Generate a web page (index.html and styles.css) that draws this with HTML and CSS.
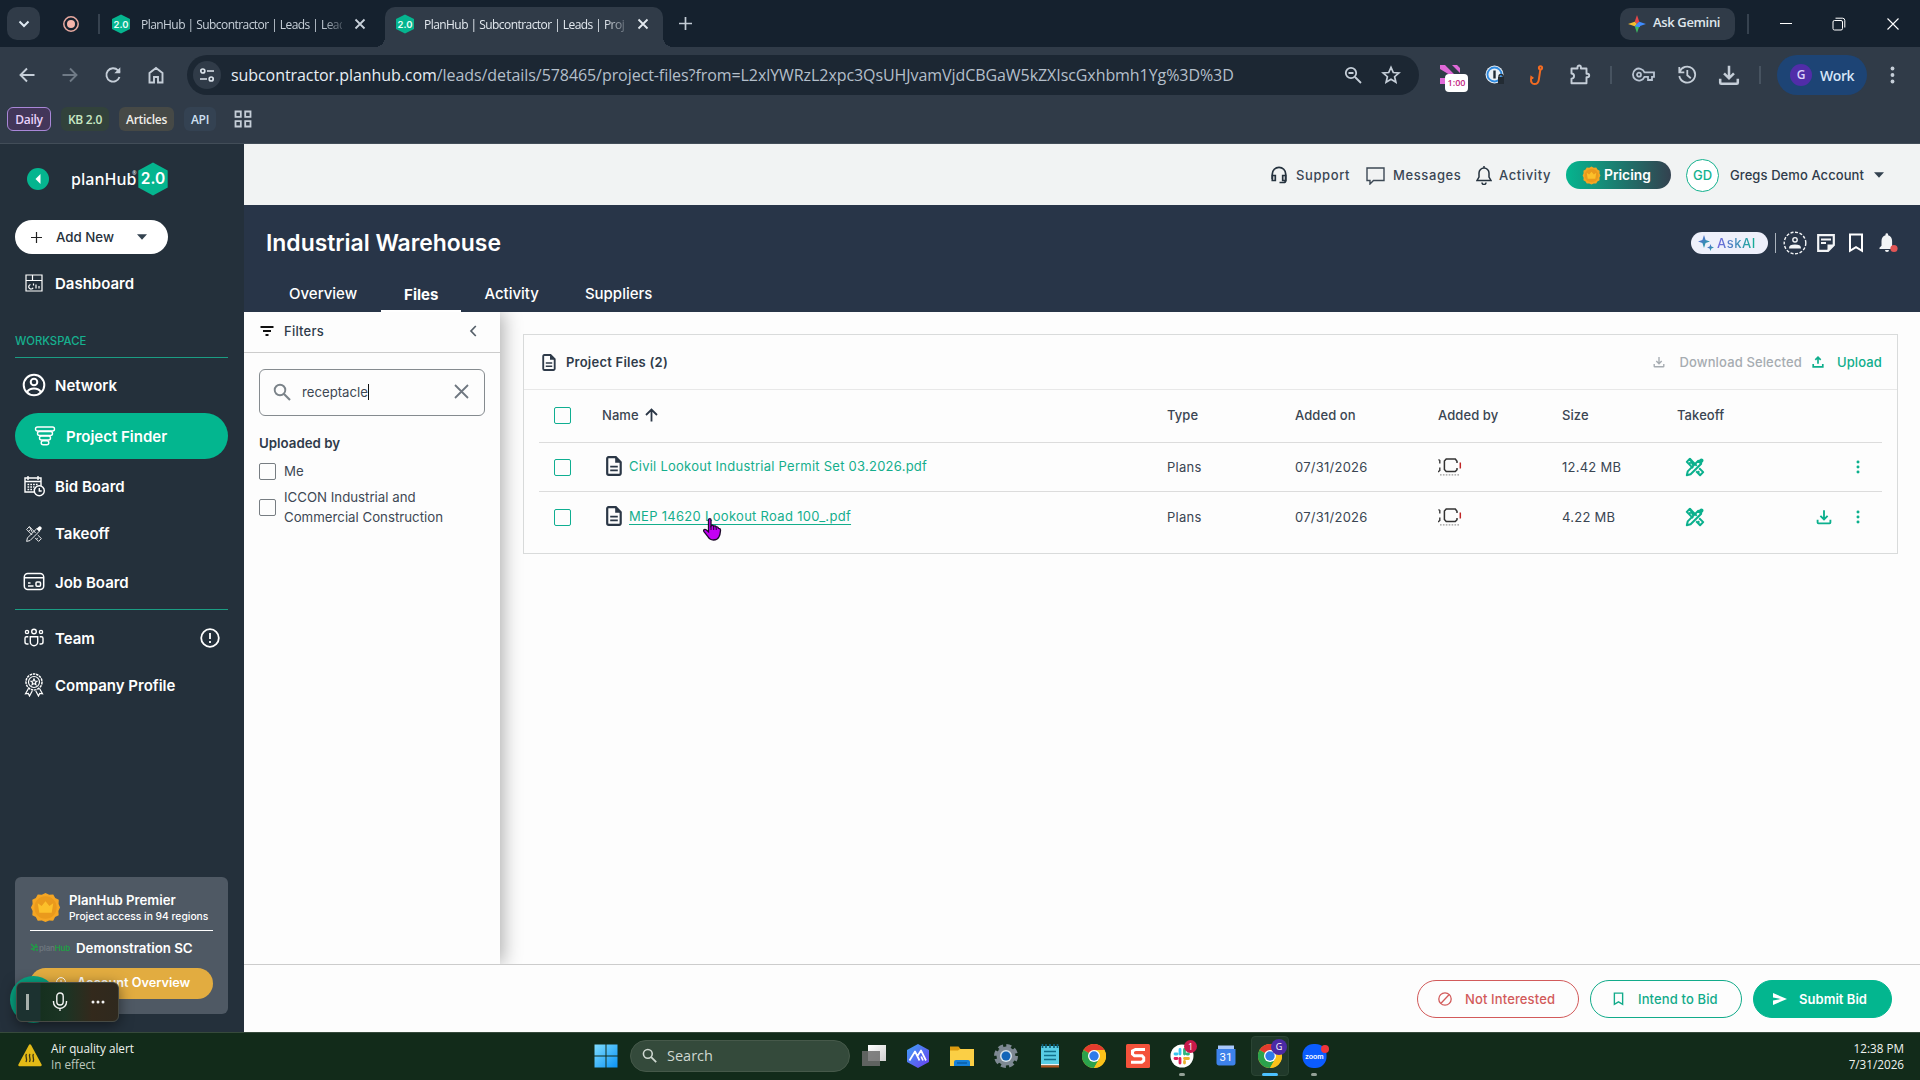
FILE: index.html
```html
<!DOCTYPE html>
<html lang="en">
<head>
    <meta charset="UTF-8">
    <meta name="viewport" content="width=device-width, initial-scale=1.0">
    <title>PlanHub | Subcontractor | Leads | Project Files</title>
    <link rel="stylesheet" href="styles.css">
</head>
<body>
    <!-- shared icons -->
    <svg class="sprite" width="0" height="0">
        <defs>
            <linearGradient id="askGrad" x1="0" y1="0" x2="1" y2="1"><stop offset="0" stop-color="#6a5be0"/><stop offset="1" stop-color="#12b095"/></linearGradient>
            <linearGradient id="winGrad" x1="0" y1="0" x2="1" y2="1"><stop offset="0" stop-color="#7fdcff"/><stop offset="1" stop-color="#0a93f5"/></linearGradient>
            <linearGradient id="appGrad" x1="0" y1="0" x2="1" y2="1"><stop offset="0" stop-color="#3fa2f5"/><stop offset="1" stop-color="#6a3df0"/></linearGradient>
            <linearGradient id="tvGrad" x1="0" y1="0" x2="1" y2="1"><stop offset="0" stop-color="#ffffff"/><stop offset="1" stop-color="#cfcfcf"/></linearGradient>
        </defs>
        <symbol id="close" viewBox="0 0 12 12"><path d="M1.5 1.5l9 9M10.5 1.5l-9 9" fill="none" stroke="currentColor" stroke-width="1.8"/></symbol>
        <symbol id="file" viewBox="0 0 16 20">
            <path d="M2.5 1.2h7.3l4.9 4.9v11.2a1.5 1.5 0 0 1-1.5 1.5H2.7a1.5 1.5 0 0 1-1.5-1.5V2.7a1.4 1.4 0 0 1 1.3-1.5z" fill="none" stroke="currentColor" stroke-width="2.2"/>
            <path d="M9.2 1v5.8H15z" fill="currentColor"/>
            <path d="M4.2 10.6h7.6M4.2 14.4h7.6" stroke="currentColor" stroke-width="1.6"/>
        </symbol>
        <symbol id="takeoff" viewBox="0 0 20 20">
            <g fill="none" stroke="currentColor" stroke-linejoin="round">
                <path d="M8.2 8.300L4.900 1.800 1.800 4.900l6.200 6.200M11.800 8.900L8.200 5.100 4.900 1.800M11.200 14.300l3.900 3.900 3.100-3.100-4-3.900"/>
                <path d="M13.300 3.800L2.700 14.400l-.9 3.800 3.800-.9L16.200 6.700zM4 7l1.700-1.700M12.800 15.800l1.500-1.500"/>
            </g>
            <path d="M12.800 4.300l2.200-2.200c.8-.8 2-.8 2.900 0s.8 2.100 0 2.900l-2.200 2.200z" fill="currentColor"/>
        </symbol>
        <symbol id="badge" viewBox="0 0 32 32">
            <path d="M16 1l3.8 1.8 4.2-.3 2 3.6 3.7 2-.2 4.2L31 16l-1.7 3.7.3 4.2-3.7 2-2 3.7-4.1-.3L16 31l-3.8-1.7-4.2.3-2-3.7-3.6-2 .3-4.2L1 16l1.7-3.7-.3-4.2 3.6-2L8 2.500l4.200.3z" fill="#f5a623"/>
            <circle cx="16" cy="16" r="11.500" fill="#ea9a1c"/>
            <path d="M8 11.500l4 3 4-5 4 5 4-3-1.600 10H9.600z" fill="#fcc02a"/>
        </symbol>
        <symbol id="download" viewBox="0 0 20 20"><path d="M10 1.500v11M5.500 8.500L10 13l4.500-4.500M2 13.500V17a1 1 0 0 0 1 1h14a1 1 0 0 0 1-1v-3.500" fill="none" stroke="currentColor" stroke-width="2.300"/></symbol>
        <symbol id="upload" viewBox="0 0 20 20"><path d="M10 13V2.500M5.500 6.500L10 2l4.500 4.500M2 13.500V18h16v-4.500" fill="none" stroke="currentColor" stroke-width="2.800"/></symbol>
        <symbol id="kebab" viewBox="0 0 4 16"><circle cx="2" cy="2.200" r="1.700" fill="currentColor"/><circle cx="2" cy="8" r="1.700" fill="currentColor"/><circle cx="2" cy="13.800" r="1.700" fill="currentColor"/></symbol>
        <symbol id="bookmark" viewBox="0 0 16 20"><path d="M2 1.500h12v16.300l-6-3.600-6 3.600z" fill="none" stroke="currentColor" stroke-width="2"/></symbol>
        <symbol id="search" viewBox="0 0 18 18"><circle cx="7" cy="7" r="5.300" fill="none" stroke="currentColor" stroke-width="1.900"/><path d="M11 11l6 6" stroke="currentColor" stroke-width="2.100"/></symbol>
        <symbol id="chrome" viewBox="0 0 24 24">
            <circle cx="12" cy="12" r="12" fill="#fbc11a"/>
            <path d="M12 12L1.600 6A12 12 0 0 1 22.400 6z" fill="#e33b2e"/>
            <path d="M1.600 6A12 12 0 0 0 12 24l5.200-9L12 12z" fill="#2ba24c"/>
            <path d="M12 6h10.400A12 12 0 0 1 12 24l5.200-9z" fill="#fbc11a"/>
            <circle cx="12" cy="12" r="6" fill="#fff"/>
            <circle cx="12" cy="12" r="4.700" fill="#2f7bea"/>
        </symbol>
        <symbol id="company" viewBox="0 0 24 18">
            <path d="M.5 1.500l1.300 1v3M1.800 9.500v3L0 14" fill="none" stroke="#3a3a3a" stroke-width="1.400"/>
            <path d="M19 5V3.200L17.300 1H8.200L6.400 3v8.500l1.800 2h9.100L19 11.700V10" fill="none" stroke="#333" stroke-width="1.500"/>
            <path d="M22.300 4.500v6" stroke="#c02626" stroke-width="1.500"/>
            <path d="M2 16.800h19" stroke="#999" stroke-width="1.200" stroke-dasharray="1.600 1.300"/>
        </symbol>
    </svg>

    <!-- browser -->
    <div class="tabstrip">
        <div class="tab-search"><svg width="12" height="8" viewBox="0 0 12 8"><path d="M1.500 1.500L6 6l4.500-4.500" fill="none" stroke="#dfe9f2" stroke-width="2"/></svg></div>
        <svg class="record" width="18" height="18" viewBox="0 0 18 18"><circle cx="9" cy="9" r="7.200" fill="none" stroke="#e8a9a0" stroke-width="1.500"/><circle cx="9" cy="9" r="4" fill="#f6b5ab"/></svg>
        <span class="tab-divider"></span>
        <div class="tab">
            <svg width="20" height="20" viewBox="0 0 20 20"><path d="M10 .5l9 4.600v9.800l-9 4.600-9-4.600V5.100z" fill="#05b58f"/><text x="10" y="13.600" text-anchor="middle" class="favicon-text">2.0</text></svg>
            <span class="tab-title">PlanHub | Subcontractor | Leads | Lead</span>
            <svg class="tab-close" width="12" height="12"><use href="#close"/></svg>
        </div>
        <div class="tab active">
            <svg width="20" height="20" viewBox="0 0 20 20"><path d="M10 .5l9 4.600v9.800l-9 4.600-9-4.600V5.100z" fill="#05b58f"/><text x="10" y="13.600" text-anchor="middle" class="favicon-text">2.0</text></svg>
            <span class="tab-title">PlanHub | Subcontractor | Leads | Proj</span>
            <svg class="tab-close" width="12" height="12"><use href="#close"/></svg>
        </div>
        <svg class="new-tab" width="13" height="13" viewBox="0 0 13 13"><path d="M6.500 0v13M0 6.500h13" stroke="#c3ccd5" stroke-width="1.700"/></svg>
        <div class="gemini">
            <svg width="18" height="18" viewBox="0 0 18 18">
                <path d="M9 0l2.300 6.700L9 9 6.700 6.700z" fill="#e5484a"/><path d="M18 9l-6.700 2.300L9 9l2.300-2.300z" fill="#3f8cff"/>
                <path d="M9 18l-2.300-6.700L9 9l2.300 2.300z" fill="#3cb961"/><path d="M0 9l6.700-2.300L9 9l-2.300 2.300z" fill="#f4be2f"/><path d="M11.300 6.700l.9 5.500-5.500-.9z" fill="#3f8cff"/>
            </svg>
            <span>Ask Gemini</span>
        </div>
        <span class="tab-divider window-divider"></span>
        <svg class="win-min" width="12" height="12" viewBox="0 0 12 12"><path d="M0 5.500h12" stroke="#fff"/></svg>
        <svg class="win-restore" width="14" height="14" viewBox="0 0 14 14"><rect x="1" y="3.500" width="9.500" height="9.500" rx="1.500" fill="none" stroke="#fff"/><path d="M3.500 1.200h7a2.300 2.300 0 0 1 2.300 2.300v7" fill="none" stroke="#fff"/></svg>
        <svg class="win-close" width="12" height="12" viewBox="0 0 12 12"><path d="M.5.5l11 11M11.500.5l-11 11" stroke="#fff" stroke-width="1.100"/></svg>
    </div>

    <div class="toolbar">
        <div class="nav-buttons">
            <svg width="18" height="18" viewBox="0 0 18 18"><path d="M16.500 9H3M9 2.500L2.500 9 9 15.500" fill="none" stroke="#c5ced8" stroke-width="1.900"/></svg>
            <svg width="18" height="18" viewBox="0 0 18 18"><path d="M1.500 9H15M9 2.500L15.500 9 9 15.500" fill="none" stroke="#6f7a86" stroke-width="1.900"/></svg>
            <svg width="18" height="18" viewBox="0 0 18 18"><path d="M15.500 11A6.700 6.700 0 1 1 14 4.300l1.700 1.700" fill="none" stroke="#c5ced8" stroke-width="1.900"/><path d="M16.300 1.200v6h-6z" fill="#c5ced8"/></svg>
            <svg width="18" height="18" viewBox="0 0 18 18"><path d="M2.500 7L9 2l6.500 5v9.500H11V11H7v5.500H2.500z" fill="none" stroke="#c5ced8" stroke-width="1.900"/></svg>
        </div>
        <div class="address">
            <span class="site-info"><svg width="16" height="16" viewBox="0 0 16 16" fill="none" stroke="#dbe3ea" stroke-width="1.700"><circle cx="3.800" cy="4" r="2"/><path d="M8 4h7M1 12h7"/><circle cx="12.200" cy="12" r="2"/></svg></span>
            <span class="url"><b>subcontractor.planhub.com</b>/leads/details/578465/project-files?from=L2xlYWRzL2xpc3QsUHJvamVjdCBGaW5kZXIscGxhbmh1Yg%3D%3D</span>
            <div class="address-icons">
                <svg width="20" height="20" viewBox="0 0 20 20" fill="none" stroke="#c5ced8" stroke-width="1.800"><circle cx="8" cy="8" r="5.200"/><path d="M5.500 8h5M12 12l6 6"/></svg>
                <svg width="20" height="20" viewBox="0 0 20 20"><path d="M10 2.300l2.300 5.200 5.600.5-4.300 3.700 1.300 5.600-4.900-3-4.900 3 1.300-5.600L2.100 8l5.600-.5z" fill="none" stroke="#c5ced8" stroke-width="1.700"/></svg>
            </div>
        </div>
        <div class="timer-ext">
            <svg width="20" height="20" viewBox="0 0 20 20"><path d="M0 0h5l10 10h-5L0 4zM8 0h4l8 8v-5l-3-3zM0 13h5v6H0z" fill="#e069d8"/></svg>
            <span>1:00</span>
        </div>
        <svg class="ext-pass" width="20" height="20" viewBox="0 0 20 20"><circle cx="9.500" cy="9.500" r="9" fill="#e8eef4"/><circle cx="9.500" cy="9.500" r="7" fill="none" stroke="#2f8be0" stroke-width="1.800"/><path d="M9.500 5.500v8" stroke="#1f2933" stroke-width="2.400"/><path d="M13 12h6v7h-6z" fill="#222b33"/><path d="M14 13v-1.500a2 2 0 0 1 4 0V13" fill="none" stroke="#222b33" stroke-width="1.400"/></svg>
        <svg class="ext-hook" width="20" height="20" viewBox="0 0 20 20" fill="none" stroke="#f26b22" stroke-width="2"><circle cx="13.500" cy="2.800" r="1.600"/><path d="M13.300 4.800l-1.500 10c-.4 2.800-2 4.200-4.300 4.200s-3.700-1.800-3.500-4.700l.3-2.300 2 1.500"/></svg>
        <svg class="ext-puzzle" width="22" height="22" viewBox="0 0 22 22"><path d="M2.500 4.500h6V3.200a1.700 1.700 0 0 1 3.400 0v1.300h5.600v5.300h1a1.700 1.700 0 0 1 0 3.400h-1v6h-15v-4.500c3.400-.2 3.400-5 0-5.200z" fill="none" stroke="#c5ced8" stroke-width="1.900" stroke-linejoin="round"/></svg>
        <span class="bar-divider"></span>
        <svg class="bar-key" width="24" height="16" viewBox="0 0 24 16" fill="none" stroke="#b9c4d2" stroke-width="1.800"><path d="M12.500 5.300h9.500v4.500h-2V13h-4v-3.200h-3.500A6 6 0 1 1 12.500 5.300z"/><circle cx="7" cy="7.700" r="2"/></svg>
        <svg class="bar-history" width="20" height="20" viewBox="0 0 20 20" fill="none" stroke="#c5ced8" stroke-width="1.800"><path d="M2.600 7A8 8 0 1 1 2.300 11M2.300 2v5.300h5M10.300 5v5.300l3.500 3"/></svg>
        <svg class="bar-download" width="22" height="22"><use href="#download"/></svg>
        <span class="bar-divider"></span>
        <div class="profile"><span class="profile-dot">G</span>Work</div>
        <svg class="bar-menu" width="5" height="18"><use href="#kebab"/></svg>
    </div>

    <div class="bookmarks">
        <span class="bookmark daily">Daily</span>
        <span class="bookmark kb">KB 2.0</span>
        <span class="bookmark articles">Articles</span>
        <span class="bookmark api">API</span>
        <svg width="18" height="18" viewBox="0 0 18 18" fill="none" stroke="#c5ced8" stroke-width="1.800"><path d="M1.500 1.500h5.300v5.300H1.500zM11.200 1.500h5.300v5.300h-5.300zM1.500 11.200h5.300v5.300H1.500zM11.200 11.200h5.300v5.300h-5.300z"/></svg>
    </div>

    <!-- app -->
    <div class="app">
        <aside class="sidebar">
            <div class="brand">
                <span class="collapse"><svg width="6" height="10" viewBox="0 0 6 10"><path d="M5.500 0v10L.5 5z" fill="#fff"/></svg></span>
                <span class="brand-name">planHub<sup>®</sup></span>
                <svg width="30" height="34" viewBox="0 0 30 34"><path d="M15 .5l14.700 8v17L15 33.500.3 25.500v-17z" fill="#05b58f"/><text x="15" y="22.300" text-anchor="middle" font-family="Inter, sans-serif" font-size="15.500" font-weight="600" fill="#fff">2.0</text></svg>
            </div>
            <div class="add-new">
                <svg width="11" height="11" viewBox="0 0 11 11"><path d="M5.500 0v11M0 5.500h11" stroke="#222" stroke-width="1.200"/></svg>
                <span>Add New</span>
                <svg width="10" height="6" viewBox="0 0 10 6"><path d="M0 .3h10L5 5.800z" fill="#33424f"/></svg>
            </div>
            <nav>
                <a class="nav-item dashboard">
                    <svg width="22" height="22" viewBox="0 0 22 22" fill="none" stroke="#fff" stroke-width="1.200"><path d="M3 3h16v16H3zM3 8.500h16M9.500 3v5.500"/><path d="M7.500 12.500a2.300 2.300 0 1 0 2.600 3.200M13 16.500v-4M16 16.500v-2.500M10.500 11.500v2"/></svg>
                    Dashboard
                </a>
                <div class="nav-label">WORKSPACE</div>
                <a class="nav-item network">
                    <svg width="24" height="24" viewBox="0 0 24 24" fill="none" stroke="#fff" stroke-width="2"><circle cx="12" cy="12" r="10.300"/><circle cx="12" cy="9" r="3.300"/><path d="M5 19.200c1.500-2.600 4-3.700 7-3.700s5.500 1.100 7 3.700"/></svg>
                    Network
                </a>
                <a class="nav-item selected">
                    <svg width="22" height="22" viewBox="0 0 22 22" fill="none" stroke="#fff" stroke-width="1.400"><rect x="1.500" y="2" width="19" height="4" rx="2"/><rect x="3.500" y="6.500" width="15" height="4" rx="2"/><rect x="5.500" y="11" width="11" height="4" rx="2"/><rect x="7.200" y="15.700" width="7.600" height="4" rx="2"/></svg>
                    Project Finder
                </a>
                <a class="nav-item bid-board">
                    <svg width="24" height="24" viewBox="0 0 24 24" fill="none" stroke="#fff" stroke-width="1.400"><path d="M12 18H3V4h16v8M3 7.500h16M6 2v4M16 2v4"/><path d="M5.500 10.500h11M5.500 13h7M5.500 15.500h6" stroke-dasharray="1.700 1.100"/><circle cx="17.300" cy="16.800" r="5"/><path d="M17.300 14v3h2.400"/></svg>
                    Bid Board
                </a>
                <a class="nav-item takeoff"><svg width="18" height="18"><use href="#takeoff"/></svg>Takeoff</a>
                <a class="nav-item job-board">
                    <svg width="24" height="24" viewBox="0 0 24 24" fill="none" stroke="#fff" stroke-width="1.500"><rect x="2.300" y="3.500" width="19.400" height="16" rx="3.500"/><path d="M2.500 7.800h19M6 13h2.500M6 16h5.500"/><rect x="14" y="12" width="4.500" height="4.200" rx="1"/></svg>
                    Job Board
                </a>
                <div class="nav-line"></div>
                <a class="nav-item team">
                    <svg width="24" height="24" viewBox="0 0 24 24" fill="none" stroke="#fff" stroke-width="1.400"><circle cx="12" cy="5.500" r="2.300"/><circle cx="5" cy="6" r="1.600"/><circle cx="19" cy="6" r="1.600"/><path d="M8.300 10.700h7.400V16a3.700 3.700 0 0 1-7.400 0zM6.300 10.700H4.500a1.500 1.500 0 0 0-1.500 1.500V16a2 2 0 0 0 2 2h1.500M17.700 10.700h1.800a1.500 1.500 0 0 1 1.500 1.500V16a2 2 0 0 1-2 2h-1.500"/></svg>
                    Team
                    <svg class="alert" width="20" height="20" viewBox="0 0 20 20" fill="none" stroke="#fff" stroke-width="1.800"><circle cx="10" cy="10" r="8.800"/><path d="M10 5v6M10 13v2"/></svg>
                </a>
                <a class="nav-item company">
                    <svg width="24" height="24" viewBox="0 0 24 24" fill="none" stroke="#fff" stroke-width="1.200"><circle cx="12" cy="9" r="8" stroke-width="1.500" stroke-dasharray="2.500 .8"/><circle cx="12" cy="9" r="5.500"/><path d="M12 6l.9 2 2.100.2-1.600 1.400.5 2.100-1.900-1.100-1.900 1.100.5-2.100L9 8.200l2.100-.2zM6.500 15.500l-3 5.300 2.800-.3 1.200 2.500 2.700-5M17.500 15.500l3 5.300-2.800-.3-1.200 2.500-2.700-5"/></svg>
                    Company Profile
                </a>
            </nav>
            <div class="plan-card">
                <div class="plan-row">
                    <svg width="31" height="31"><use href="#badge"/></svg>
                    <div><div class="plan-title">PlanHub Premier</div><div class="plan-sub">Project access in 94 regions</div></div>
                </div>
                <div class="org-row">
                    <span class="org-logo"><svg width="9" height="9" viewBox="0 0 9 9" fill="none" stroke="#1f9f45" stroke-width="1.400"><path d="M1 1l3 3h4M4 8V4M1 6h3M6 1v3M6 7h2"/></svg><i>plan</i><em>Hub</em></span>
                    <span>Demonstration SC</span>
                </div>
                <div class="overview-btn"><svg width="10" height="12" viewBox="0 0 10 12" fill="none" stroke="#fff"><circle cx="5" cy="5" r="4.400"/><path d="M5 3v2l2 1"/></svg>Account Overview</div>
            </div>
        </aside>

        <main class="main">
            <header class="topbar">
                <span class="top-link support"><svg width="16" height="18" viewBox="0 0 16 18" fill="none" stroke="#25323e" stroke-width="1.700"><path d="M1.300 13V8a6.700 6.700 0 0 1 13.400 0v6.500c0 1.500-1 2-2.200 2H8.500"/><path d="M1.300 9.500h3v5h-3zM14.700 9.500h-3v5h3z"/></svg>Support</span>
                <span class="top-link messages"><svg width="19" height="19" viewBox="0 0 19 19" fill="none" stroke="#3c4854" stroke-width="1.400"><path d="M1 2h17v12.500H7.500L4 18v-3.500H1z"/></svg>Messages</span>
                <span class="top-link activity"><svg width="16" height="20" viewBox="0 0 16 20" fill="none" stroke="#25323e" stroke-width="1.500"><path d="M1 15.500h14L13 12V8A5 5 0 0 0 3 8v4zM8 3V1M6 17.500a2 2 0 0 0 4 0"/></svg>Activity</span>
                <span class="pricing"><svg width="19" height="19"><use href="#badge"/></svg>Pricing</span>
                <span class="avatar">GD</span>
                <span class="account">Gregs Demo Account</span>
                <svg class="account-caret" width="10" height="6" viewBox="0 0 10 6"><path d="M0 .3h10L5 5.800z" fill="#33424f"/></svg>
            </header>

            <section class="project-head">
                <div class="project-row">
                    <h1>Industrial Warehouse</h1>
                    <div class="project-actions">
                        <span class="ask-ai"><svg width="16" height="18" viewBox="0 0 16 18" fill="url(#askGrad)"><path d="M6 1l1.600 4.900L12 7.500 7.600 9.100 6 14 4.400 9.100 0 7.500l4.400-1.600z"/><path d="M12.500 10l.9 2.600 2.600.9-2.600.9-.9 2.600-.9-2.600-2.600-.9 2.600-.9z"/></svg><b>AskAI</b></span>
                        <span class="action-line"></span>
                        <svg width="24" height="24" viewBox="0 0 24 24" fill="none" stroke="#f2f4f6" stroke-width="1.400"><circle cx="12" cy="12" r="10.800" stroke-dasharray="3 1.600"/><circle cx="12" cy="8.800" r="2.200"/><path d="M7 16.500c0-2.700 10-2.700 10 0z" stroke-width="1.800"/></svg>
                        <svg class="note" width="18" height="18" viewBox="0 0 18 18"><path d="M1.200 1.200h15.600V11L11 16.800H1.200z" fill="none" stroke="#f2f4f6" stroke-width="2.200"/><path d="M10.500 17v-6.500H17z" fill="#f2f4f6"/><path d="M4 5.500h10M4 9h5" stroke="#f2f4f6" stroke-width="1.900"/></svg>
                        <svg class="mark" width="16" height="20"><use href="#bookmark"/></svg>
                        <svg class="bell" width="20" height="20" viewBox="0 0 20 20"><path d="M1.500 16v-1.200l2-2V8c0-3 1.500-5 4-5.700V1.500a1.300 1.300 0 0 1 2.600 0v.8c2.500.7 4 2.700 4 5.700v4.800l2 2V16zM7 17h4a2 2 0 0 1-4 0z" fill="#f2f4f6"/><circle cx="16" cy="15.500" r="3.600" fill="#e25555"/></svg>
                    </div>
                </div>
                <div class="tabs">
                    <span>Overview</span>
                    <span class="current">Files</span>
                    <span>Activity</span>
                    <span>Suppliers</span>
                </div>
            </section>

            <div class="content">
                <div class="filters">
                    <div class="filters-head">
                        <svg width="14" height="10" viewBox="0 0 14 10" stroke="#111" stroke-width="1.900"><path d="M.5 1h13M3 5h8M5.500 9h3"/></svg>
                        <span>Filters</span>
                        <svg class="filters-close" width="8" height="12" viewBox="0 0 8 12"><path d="M6.800 1L2 6l4.800 5" fill="none" stroke="#555f69" stroke-width="1.700"/></svg>
                    </div>
                    <div class="search-box">
                        <svg width="18" height="18"><use href="#search"/></svg>
                        <span class="search-text">receptacle</span>
                        <svg class="clear" width="15" height="15" viewBox="0 0 15 15"><path d="M1 1l13 13M14 1L1 14" stroke="#6f7780" stroke-width="1.800"/></svg>
                    </div>
                    <h3>Uploaded by</h3>
                    <div class="option"><span class="checkbox grey"></span><span>Me</span></div>
                    <div class="option two-line"><span class="checkbox grey"></span><span>ICCON Industrial and<br>Commercial Construction</span></div>
                </div>

                <div class="files-card">
                    <div class="files-head">
                        <svg width="14" height="17"><use href="#file"/></svg>
                        <span class="files-title">Project Files (2)</span>
                        <span class="download-selected"><svg width="12" height="12"><use href="#download"/></svg>Download Selected</span>
                        <span class="upload"><svg width="12" height="12"><use href="#upload"/></svg>Upload</span>
                    </div>
                    <div class="row row-head">
                        <span class="checkbox"></span>
                        <span class="sort">Name <svg width="13" height="14" viewBox="0 0 13 14"><path d="M6.500 13.500V2M1 7l5.500-5.500L12 7" fill="none" stroke="#2b3746" stroke-width="1.800"/></svg></span>
                        <span>Type</span><span>Added on</span><span>Added by</span><span>Size</span><span>Takeoff</span><span></span>
                    </div>
                    <div class="row">
                        <span class="checkbox"></span>
                        <span class="name"><svg width="16" height="20"><use href="#file"/></svg><a>Civil Lookout Industrial Permit Set 03.2026.pdf</a></span>
                        <span>Plans</span><span>07/31/2026</span>
                        <span><svg class="company-logo" width="24" height="18"><use href="#company"/></svg></span>
                        <span>12.42 MB</span>
                        <span class="takeoff-cell"><svg width="20" height="20"><use href="#takeoff"/></svg></span>
                        <span class="row-actions"><svg width="4" height="14"><use href="#kebab"/></svg></span>
                    </div>
                    <div class="row">
                        <span class="checkbox"></span>
                        <span class="name hovered"><svg width="16" height="20"><use href="#file"/></svg><a>MEP 14620 Lookout Road 100_.pdf</a>
                            <svg class="cursor" width="19" height="23" viewBox="0 0 19 23"><path d="M5.500 1.800c0-1.500 2.500-1.500 2.500 0v6c.6-.9 2.400-.7 2.600.4.700-.7 2.300-.3 2.500.8.800-.5 2.300.1 2.300 1.300l1.300.3c.7.300.9 1 .8 2-.2 2.500-.5 4.500-1.600 6.400-1 2-2.700 3-5.400 3-3.200 0-4.700-1.500-6-4L.8 13.300c-.6-1.500 1-2.500 2.300-1.500l2.400 2z" fill="#c400f5" stroke="#1d0b2b" stroke-width="1.300"/><path d="M8 8v4M10.700 8.500V12M13.200 9.500V12" stroke="#1d0b2b"/></svg>
                        </span>
                        <span>Plans</span><span>07/31/2026</span>
                        <span><svg class="company-logo" width="24" height="18"><use href="#company"/></svg></span>
                        <span>4.22 MB</span>
                        <span class="takeoff-cell"><svg width="20" height="20"><use href="#takeoff"/></svg></span>
                        <span class="row-actions"><svg width="16" height="16"><use href="#download"/></svg><svg width="4" height="14"><use href="#kebab"/></svg></span>
                    </div>
                </div>
            </div>

            <footer class="bid-bar">
                <span class="btn reject"><svg width="14" height="14" viewBox="0 0 14 14" fill="none" stroke="currentColor" stroke-width="1.300"><circle cx="7" cy="7" r="6.200"/><path d="M11 2.800L3 11.200"/></svg>Not Interested</span>
                <span class="btn intend"><svg width="11" height="14"><use href="#bookmark"/></svg>Intend to Bid</span>
                <span class="btn submit"><svg width="14" height="12" viewBox="0 0 14 12"><path d="M0 0l14 6-14 6V7.500L8 6 0 4.500z" fill="#fff"/></svg>Submit Bid</span>
            </footer>
        </main>
    </div>

    <!-- floating call controls -->
    <div class="bubble"></div>
    <div class="call-bar">
        <span class="grip"></span>
        <svg width="16" height="20" viewBox="0 0 16 20" fill="none" stroke="#f3f3f3" stroke-width="1.400"><rect x="4.800" y="1" width="6.400" height="12" rx="3.200"/><path d="M1.500 9v1a6.500 6.500 0 0 0 13 0V9M8 16.500V19"/></svg>
        <svg width="14" height="4" viewBox="0 0 14 4" fill="#f3f3f3"><circle cx="2" cy="2" r="1.500"/><circle cx="7" cy="2" r="1.500"/><circle cx="12" cy="2" r="1.500"/></svg>
    </div>

    <!-- windows taskbar -->
    <div class="taskbar">
        <div class="weather">
            <svg width="24" height="23" viewBox="0 0 24 23"><path d="M12 1.500L22.500 21H1.500z" fill="#e3ba17" stroke="#e3ba17" stroke-width="2.500" stroke-linejoin="round"/><path d="M8.500 10c-2 2.500 1.500 4-.5 8M12 10c-2 2.500 1.500 4-.5 8M15.500 10c-2 2.500 1.500 4-.5 8" fill="none" stroke="#3a3415" stroke-width="1.300"/></svg>
            <div><div>Air quality alert</div><div class="effect">In effect</div></div>
        </div>
        <svg class="start" width="24" height="24" viewBox="0 0 24 24" fill="url(#winGrad)"><path d="M.5.5h11v11H.5zM12.500.5h11v11h-11zM.5 12.500h11v11H.5zM12.500 12.500h11v11h-11z"/></svg>
        <div class="task-search"><svg width="15" height="15"><use href="#search"/></svg>Search</div>
        <div class="apps">
            <svg width="24" height="24" viewBox="0 0 24 24"><path d="M6 1h18v16H6z" fill="url(#tvGrad)"/><path d="M0 7h18v15H0z" fill="#6d6d6d" opacity=".85"/></svg>
            <svg width="24" height="24" viewBox="0 0 24 24"><path d="M12 0l11 6v12l-11 6-11-6V6z" fill="url(#appGrad)"/><path d="M3.500 16.500l5.500-9 4.500 9M11.500 12l3.500-5.500 5 10M15.200 12.500l1.800 4" fill="none" stroke="#fff" stroke-width="1.700" stroke-linejoin="round"/></svg>
            <svg width="24" height="24" viewBox="0 0 24 24"><path d="M0 2.500h8.500l2 2.500H24v4H0z" fill="#dc9b10"/><path d="M0 6.500h8l2-1.500h14v17H0z" fill="#fbcf45"/><path d="M4 22v-4a2 2 0 0 1 2-2h12a2 2 0 0 1 2 2v4z" fill="#1680d8"/><path d="M7 19h10" stroke="#0b5ba3" stroke-width="1.400"/></svg>
            <svg width="24" height="24" viewBox="0 0 24 24"><circle cx="12" cy="12" r="9.500" fill="#7e8993"/><circle cx="12" cy="12" r="10.400" fill="none" stroke="#7e8993" stroke-width="3.200" stroke-dasharray="5 3.168"/><circle cx="12" cy="12" r="6" fill="#d6e2ea"/><circle cx="12" cy="12" r="4.500" fill="#1465b8"/></svg>
            <svg width="24" height="24" viewBox="0 0 24 24"><path d="M3 2h18v19H3z" fill="#59cde5"/><path d="M3 20h18v1.500H3z" fill="#f1f1f1"/><path d="M3 21.500h18V23.500H3z" fill="#b0541e"/><path d="M4.500 0v4M8 0v4M12 0v4M16 0v4M19.500 0v4" stroke="#10627d" stroke-width="1.700"/><path d="M6 7.500h12M6 11.500h12M6 15.500h12" stroke="#116f8b" stroke-width="1.500"/></svg>
            <svg width="24" height="24"><use href="#chrome"/></svg>
            <svg width="24" height="24" viewBox="0 0 24 24"><rect width="24" height="24" rx="1.500" fill="#f4523b"/><path d="M19 5.500H9.500L6.500 7v3l2 1.800h7.500l1.700 1.700v3l-2 1.700H5" fill="none" stroke="#fff" stroke-width="3"/></svg>
            <span class="task-app open"><svg width="24" height="24" viewBox="0 0 24 24"><circle cx="12" cy="12" r="11.500" fill="#fff"/><g fill="none" stroke-width="2.800" stroke-linecap="round"><path d="M10 5.500V10M5 10h2" stroke="#36c5f0"/><path d="M14.500 5.500V10M17 10h1.500" stroke="#2eb67d"/><path d="M14.500 14.500h4M14.500 17.500V19" stroke="#ecb22e"/><path d="M10 14.500V19M5 14.500h2" stroke="#e01e5a"/></g></svg><span class="count">1</span></span>
            <svg width="24" height="24" viewBox="0 0 24 24"><path d="M4 1.500h16v4H4z" fill="#a9c8fb"/><path d="M2.500 5h19v14c0 1.600-1 2.500-2.500 2.500H5c-1.500 0-2.500-.9-2.500-2.500z" fill="#3d82ea"/><text x="12" y="16.500" text-anchor="middle" font-family="Roboto, sans-serif" font-size="11.500" fill="#fff">31</text></svg>
            <span class="task-app focused"><svg width="24" height="24"><use href="#chrome"/></svg><span class="count user">G</span></span>
            <span class="task-app open zoom"><svg width="25" height="24" viewBox="0 0 25 24"><rect x=".5" width="24" height="24" rx="11" fill="#0b5cff"/><text x="12.500" y="14.500" text-anchor="middle" font-family="Lato, sans-serif" font-size="7.500" font-weight="700" fill="#fff">zoom</text></svg><span class="dot"></span></span>
        </div>
        <div class="clock">12:38 PM<br>7/31/2026</div>
    </div>
</body>
</html>
```
FILE: styles.css
```css
* {
    box-sizing: border-box;
}

body {
    margin: 0;
    width: 1920px;
    height: 1080px;
    overflow: hidden;
    position: relative;
    display: flex;
    flex-direction: column;
    font-family: Inter, sans-serif;
    font-size: 13px;
    color: #2f3b4a;
    background-color: #fdfdfd;
}

svg {
    display: block;
    flex-shrink: 0;
}

.sprite {
    position: absolute;
}

/* Browser */
.tabstrip,
.toolbar,
.bookmarks,
.taskbar {
    font-family: "Open Sans", "Noto Sans", sans-serif;
}

.tabstrip {
    display: flex;
    align-items: center;
    height: 47px;
    padding: 0 21px 0 7px;
    background-color: #15212e;
}

.tab-search {
    display: flex;
    align-items: center;
    justify-content: center;
    width: 33px;
    height: 33px;
    border-radius: 10px;
    background-color: #303b48;
}

.record {
    margin-left: 22px;
}

.tab-divider {
    width: 2px;
    height: 20px;
    margin-left: 18px;
    background-color: #36424f;
}

.tab {
    display: flex;
    align-items: center;
    margin-left: 11px;
    color: #c8d1da;
}

.favicon-text {
    font-family: Inter, sans-serif;
    font-size: 9.5px;
    font-weight: 600;
    fill: #e9fff8;
}

.tab-title {
    width: 201px;
    margin-left: 10px;
    padding-top: 1px;
    white-space: nowrap;
    font-size: 12px;
    letter-spacing: -0.55px;
    -webkit-mask-image: linear-gradient(to right, #000 90%, transparent 104%);
    mask-image: linear-gradient(to right, #000 90%, transparent 104%);
}

.tab-close {
    margin-left: 12px;
}

.tab.active {
    position: relative;
    align-self: flex-end;
    height: 40px;
    margin-left: 19px;
    padding: 0 14px 6px 10px;
    border-radius: 10px 10px 0 0;
    background-color: #303b48;
    color: #e3e9ef;
}

.tab.active .tab-title {
    margin-left: 9px;
}

.tab.active::before,
.tab.active::after {
    content: "";
    position: absolute;
    bottom: 0;
    width: 10px;
    height: 10px;
}

.tab.active::before {
    left: -10px;
    background: radial-gradient(circle at 0 0, transparent 10px, #303b48 10px);
}

.tab.active::after {
    right: -10px;
    background: radial-gradient(circle at 100% 0, transparent 10px, #303b48 10px);
}

.new-tab {
    margin-left: 16px;
}

.gemini {
    display: flex;
    align-items: center;
    width: 115px;
    height: 32px;
    margin-left: auto;
    padding-left: 8px;
    gap: 7px;
    border-radius: 10px;
    background-color: #303b48;
    color: #dfe6ec;
    font-size: 13px;
    font-weight: 600;
    letter-spacing: -0.35px;
}

.gemini span {
    padding-bottom: 3px;
}

.window-divider {
    margin-left: 12px;
}

.win-min {
    margin-left: 31px;
}

.win-restore {
    margin-left: 40px;
}

.win-close {
    margin-left: 41px;
}

.toolbar {
    display: flex;
    align-items: center;
    height: 56px;
    padding-left: 18px;
    background-color: #303b48;
}

.nav-buttons {
    display: flex;
    gap: 25px;
}

.address {
    display: flex;
    align-items: center;
    width: 1232px;
    height: 40px;
    margin-left: 22px;
    padding: 0 18px 0 6px;
    border-radius: 20px;
    background-color: #1c2733;
}

.site-info {
    display: flex;
    align-items: center;
    justify-content: center;
    width: 28px;
    height: 28px;
    border-radius: 14px;
    background-color: #303b48;
}

.url {
    margin-left: 10px;
    font-size: 16px;
    letter-spacing: -0.07px;
    color: #b4bfca;
}

.url b {
    font-weight: 400;
    color: #e8eef4;
}

.address-icons {
    display: flex;
    gap: 18px;
    margin-left: auto;
}

.timer-ext {
    position: relative;
    width: 28px;
    height: 20px;
    margin-left: 21px;
}

.timer-ext span {
    position: absolute;
    top: 9px;
    left: 5px;
    width: 23px;
    height: 18px;
    border-radius: 4px;
    background-color: #fff;
    color: #c2257f;
    font-size: 9px;
    font-weight: 600;
    line-height: 18px;
    text-align: center;
}

.ext-pass {
    margin-left: 17px;
}

.ext-hook {
    margin-left: 22px;
}

.ext-puzzle {
    margin-left: 22px;
}

.bar-divider {
    width: 2px;
    height: 18px;
    margin-left: 19px;
    background-color: #475360;
}

.bar-key {
    margin-left: 20px;
}

.bar-history {
    margin-left: 21px;
}

.bar-download {
    margin-left: 21px;
    color: #c5ced8;
}

.profile {
    display: flex;
    align-items: center;
    gap: 8px;
    width: 90px;
    height: 40px;
    margin-left: 16px;
    padding-left: 13px;
    border-radius: 20px;
    background-color: #1d4475;
    color: #d6e6f8;
    font-size: 14px;
    font-weight: 600;
    letter-spacing: -0.45px;
}

.profile-dot {
    width: 22px;
    height: 22px;
    border-radius: 11px;
    background-color: #512da8;
    color: #ded3fa;
    font-size: 12px;
    line-height: 22px;
    text-align: center;
}

.bar-menu {
    margin-left: 23px;
    color: #c5ced8;
}

.bookmarks {
    display: flex;
    height: 41px;
    padding: 4px 0 0 7px;
    border-bottom: 1px solid #424d58;
    background-color: #303b48;
}

.bookmark {
    height: 24px;
    border-radius: 6px;
    font-size: 12px;
    font-weight: 600;
    letter-spacing: -0.28px;
    line-height: 25px;
    text-align: center;
}

.bookmark.daily {
    width: 44px;
    border: 1px solid #a987d8;
    background-color: #43365a;
    color: #e9d2fb;
    line-height: 23px;
}

.bookmark.kb {
    width: 48px;
    margin-left: 10px;
    background-color: #32423b;
    color: #c8e8c4;
}

.bookmark.articles {
    width: 55px;
    margin-left: 10px;
    background-color: #464946;
    color: #f0eee9;
}

.bookmark.api {
    width: 32px;
    margin-left: 10px;
    background-color: #344252;
    color: #cfe0f2;
}

.bookmarks svg {
    margin: 3px 0 0 18px;
}

/* Sidebar */
.app {
    display: flex;
    height: 888px;
}

.sidebar {
    display: flex;
    flex-direction: column;
    width: 244px;
    padding: 0 16px 18px 15px;
    background-color: #24303b;
    color: #fff;
}

.brand {
    display: flex;
    align-items: center;
    height: 69px;
    padding-left: 12px;
}

.collapse {
    display: flex;
    align-items: center;
    justify-content: center;
    width: 22px;
    height: 22px;
    border-radius: 11px;
    background-color: #05b58f;
}

.brand-name {
    width: 67px;
    margin-left: 22px;
    font-family: "Noto Sans", sans-serif;
    font-size: 16px;
    font-weight: 500;
    white-space: nowrap;
}

.brand-name sup {
    margin-left: -4px;
    font-size: 5px;
    vertical-align: 10px;
    line-height: 0;
}

.add-new {
    display: flex;
    align-items: center;
    width: 153px;
    height: 34px;
    margin-top: 7px;
    padding-left: 16px;
    border-radius: 17px;
    background-color: #fff;
    color: #26313c;
    font-size: 13.3px;
    font-weight: 500;
}

.add-new span {
    width: 81px;
    margin-left: 14px;
}

.nav-item {
    display: flex;
    align-items: center;
    height: 46px;
    font-size: 15px;
    font-weight: 600;
}

.nav-item svg {
    width: 24px;
    margin: 0 9px 0 7px;
}

.nav-item.dashboard {
    margin-top: 6px;
}

.nav-label {
    height: 26px;
    margin-top: 26px;
    border-bottom: 1px solid #1b9d83;
    color: #16b08f;
    font-size: 11.3px;
    font-weight: 500;
    line-height: 19px;
}

.nav-item.network {
    margin-top: 4px;
}

.nav-item.selected {
    margin-top: 5px;
    padding-left: 11px;
    border-radius: 23px;
    background-color: #03b68f;
}

.nav-item.bid-board {
    margin-top: 4px;
}

.nav-item.takeoff {
    margin-top: 1px;
}

.nav-item.takeoff svg {
    width: 18px;
    margin: 1px 12px 0 10px;
}

.nav-item.job-board {
    margin-top: 3px;
}

.nav-line {
    height: 1px;
    margin: 4px 0 5px;
    background-color: #1b9d83;
}

.nav-item .alert {
    width: 20px;
    margin: 0 8px 0 auto;
}

.nav-item.company {
    margin-top: 1px;
}

.plan-card {
    height: 137px;
    margin-top: auto;
    padding: 14px 15px 0;
    border-radius: 6px;
    background-color: #4f5964;
}

.plan-row {
    display: flex;
    align-items: center;
    gap: 8px;
    height: 40px;
    padding-bottom: 6px;
    border-bottom: 1px solid #fff;
}

.plan-title {
    padding-top: 1px;
    font-size: 13.2px;
    font-weight: 600;
    line-height: 17px;
}

.plan-sub {
    font-size: 10.3px;
    font-weight: 500;
    line-height: 15px;
    white-space: nowrap;
}

.org-row {
    display: flex;
    align-items: center;
    gap: 8px;
    height: 33px;
    font-size: 13.3px;
    font-weight: 600;
}

.org-logo {
    display: flex;
    align-items: center;
    width: 38px;
    font-size: 8px;
    letter-spacing: -0.2px;
}

.org-logo i {
    font-style: normal;
    color: #6c757d;
}

.org-logo em {
    font-style: normal;
    color: #1f9f45;
}

.overview-btn {
    display: flex;
    align-items: center;
    gap: 11px;
    height: 31px;
    margin-top: 4px;
    padding: 0 0 2px 26px;
    border-radius: 16px;
    background-color: #e2ac40;
    font-size: 12.7px;
    font-weight: 600;
}

/* Top bar */
.main {
    display: flex;
    flex-direction: column;
    width: 1676px;
}

.topbar {
    display: flex;
    align-items: center;
    height: 62px;
    margin-bottom: -1px;
    padding-left: 1027px;
    background-color: #f1f3f3;
}

.top-link {
    display: flex;
    align-items: center;
    color: #3a4653;
    font-weight: 500;
    letter-spacing: 0.6px;
}

.support {
    gap: 9px;
    width: 95px;
}

.messages {
    gap: 8px;
    width: 110px;
}

.activity {
    gap: 7px;
    width: 90px;
}

.pricing {
    display: flex;
    align-items: center;
    gap: 3px;
    width: 105px;
    height: 28px;
    padding-left: 16px;
    border-radius: 14px;
    background: linear-gradient(to right, #05b58f, #33414f);
    color: #fff;
    font-size: 13.8px;
    font-weight: 600;
}

.avatar {
    width: 33px;
    height: 33px;
    margin-left: 15px;
    border: 1px solid #14b18e;
    border-radius: 17px;
    background-color: #fff;
    color: #14b18e;
    font-weight: 500;
    line-height: 31px;
    text-align: center;
}

.account {
    width: 134px;
    margin: 0 10px 1px 11px;
    font-weight: 500;
    letter-spacing: 0.08px;
    white-space: nowrap;
}

/* Project header */
.project-head {
    position: relative;
    height: 107px;
    background-color: #283548;
    color: #fff;
}

.project-row {
    display: flex;
    align-items: center;
    justify-content: space-between;
    height: 76px;
    padding: 0 22px;
}

h1 {
    margin: 0;
    font-size: 22.9px;
    font-weight: 600;
}

.project-actions {
    display: flex;
    align-items: center;
}

.ask-ai {
    display: flex;
    align-items: center;
    gap: 3px;
    width: 77px;
    height: 22px;
    padding-left: 7px;
    border-radius: 11px;
    background-color: #eef0fb;
    letter-spacing: 0.5px;
}

.ask-ai b {
    font-weight: 500;
    background: linear-gradient(to right, #7165df, #12b095);
    -webkit-background-clip: text;
    background-clip: text;
    color: transparent;
}

.action-line {
    width: 1px;
    height: 20px;
    margin: 0 7px;
    background-color: #aab2bc;
}

.note {
    margin-left: 10px;
}

.mark {
    margin-left: 13px;
}

.bell {
    margin-left: 14px;
}

.tabs {
    display: flex;
    height: 31px;
    padding-left: 22px;
    font-size: 15px;
    font-weight: 500;
    line-height: 26px;
}

.tabs span {
    padding: 0 23px;
}

.tabs .current {
    margin-left: 1px;
    border-bottom: 2px solid #fff;
    font-weight: 700;
    line-height: 28px;
}

/* Filters */
.content {
    display: flex;
    height: 652px;
}

.filters {
    width: 256px;
    box-shadow: 3px 0 18px rgba(0, 0, 0, 0.32);
    clip-path: inset(0 -30px 0 0);
    background-color: #fdfdfd;
}

.filters-head {
    display: flex;
    align-items: center;
    height: 41px;
    padding: 0 23px 2px 16px;
    border-bottom: 1px solid #ccc;
    font-weight: 500;
    letter-spacing: 0.23px;
}

.filters-head span {
    margin-left: 10px;
}

.filters-close {
    margin-left: auto;
}

.search-box {
    display: flex;
    align-items: center;
    width: 226px;
    height: 47px;
    margin: 16px 0 0 15px;
    padding: 0 15px 2px 13px;
    border: 1px solid #858b8f;
    border-radius: 6px;
    color: #7b8389;
}

.search-text {
    margin-left: 11px;
    border-right: 1px solid #111;
    color: #3d4854;
    font-size: 13.2px;
    line-height: 16px;
}

.clear {
    margin-left: auto;
}

h3 {
    margin: 17px 0 0 15px;
    font-size: 13.3px;
    font-weight: 600;
    line-height: 20px;
}

.option {
    display: flex;
    align-items: center;
    gap: 8px;
    margin: 8px 0 0 15px;
    font-size: 13.25px;
    line-height: 20px;
    color: #3d4854;
}

.option.two-line {
    margin-top: 6px;
}

.checkbox {
    flex-shrink: 0;
    width: 17px;
    height: 17px;
    border: 1px solid #0fae91;
    border-radius: 2px;
}

.checkbox.grey {
    border-color: #777d82;
}

/* Files table */
.files-card {
    width: 1375px;
    height: 220px;
    margin: 22px 0 0 23px;
    border: 1px solid #d9dbdb;
}

.files-head {
    display: flex;
    align-items: center;
    height: 55px;
    padding: 0 15px 0 18px;
    border-bottom: 1px solid #e8e8e8;
}

.files-title {
    margin-left: 10px;
    font-weight: 600;
    letter-spacing: 0.23px;
}

.download-selected,
.upload {
    display: flex;
    align-items: center;
    gap: 14px;
    font-weight: 500;
    letter-spacing: 0.13px;
}

.download-selected {
    margin-left: auto;
    color: #a6acb1;
}

.upload {
    margin-left: 10px;
    gap: 13px;
    color: #0fae8c;
}

.row {
    display: grid;
    grid-template-columns: 63px 565px 128px 143px 124px 115px 120px 1fr;
    align-items: center;
    height: 49px;
    margin: 0 15px;
    border-bottom: 1px solid #dcdcdc;
    letter-spacing: 0.25px;
    color: #3a4552;
}

.row:last-child {
    height: 50px;
    border-bottom: none;
}

.row .checkbox {
    margin-left: 15px;
}

.row-head {
    height: 53px;
    padding-bottom: 2px;
    font-weight: 500;
    letter-spacing: 0.08px;
}

.sort {
    display: flex;
    align-items: center;
    gap: 6px;
}

.name {
    position: relative;
    display: flex;
    align-items: center;
    gap: 7px;
    padding-left: 4px;
    color: #2b3746;
}

.name svg {
    margin-bottom: 2px;
}

.name a {
    margin-bottom: 2px;
    color: #14ae8c;
}

.hovered a {
    text-decoration: underline;
    text-underline-offset: 3px;
    letter-spacing: 0.3px;
}

.cursor {
    position: absolute;
    left: 101px;
    top: 12px;
}

.company-logo {
    margin-bottom: 1px;
}

.takeoff-cell {
    padding-left: 8px;
    color: #0bb08d;
}

.takeoff-cell svg {
    stroke-width: 2;
}

.row-actions {
    display: flex;
    align-items: center;
    justify-content: flex-end;
    gap: 24px;
    padding-right: 22px;
    color: #0bb08d;
}

/* Bid bar */
.bid-bar {
    position: relative;
    display: flex;
    justify-content: flex-end;
    height: 68px;
    padding: 15px 28px 0 0;
    border-top: 1px solid #ccc;
    background-color: #fdfdfd;
}

.btn {
    display: flex;
    align-items: center;
    height: 38px;
    border: 1px solid currentColor;
    border-radius: 20px;
    font-weight: 500;
    letter-spacing: 0.13px;
}

.reject {
    width: 162px;
    gap: 13px;
    padding-left: 20px;
    color: #d25a5a;
}

.intend {
    width: 152px;
    gap: 14px;
    margin-left: 11px;
    padding-left: 22px;
    color: #12ab8a;
}

.submit {
    width: 139px;
    gap: 12px;
    margin-left: 11px;
    padding-left: 19px;
    border-color: #03b68f;
    background-color: #03b68f;
    color: #fff;
    font-weight: 600;
    letter-spacing: 0.04px;
}

/* Call controls overlay */
.bubble {
    position: absolute;
    left: 10px;
    top: 976px;
    width: 47px;
    height: 47px;
    border-radius: 50%;
    background-color: #07a583;
}

.call-bar {
    position: absolute;
    left: 16px;
    top: 982px;
    display: flex;
    align-items: center;
    width: 103px;
    height: 40px;
    padding-left: 9px;
    border: 1px solid #474a44;
    border-radius: 6px;
    background: linear-gradient(to right, #1c3230 0, #1c3230 23px, #16301f 24px, #1b3424 48px, #33291c 75px, #2f291e);
    box-shadow: 0 3px 14px rgba(0, 0, 0, 0.5);
}

.grip {
    width: 3px;
    height: 16px;
    margin-right: 23px;
    background-color: #a6b0ab;
}

.call-bar svg + svg {
    margin-left: 23px;
}

/* Taskbar */
.taskbar {
    position: relative;
    display: flex;
    align-items: center;
    height: 48px;
    padding: 0 16px 2px 18px;
    border-top: 1px solid #364a3b;
    background-color: #122b1a;
    color: #f0f3f0;
    font-size: 11.7px;
    line-height: 16px;
}

.weather {
    display: flex;
    align-items: center;
    gap: 9px;
    width: 576px;
}

.effect {
    color: #bcc7be;
}

.start {
    margin-top: 1px;
}

.task-search {
    display: flex;
    align-items: center;
    gap: 10px;
    width: 220px;
    height: 32px;
    margin: 0 12px;
    padding-left: 11px;
    border: 1px solid #46594a;
    border-radius: 16px;
    background-color: #344a3b;
    color: #cfd8d1;
    font-size: 14.5px;
}

.apps {
    display: flex;
    gap: 20px;
}

.task-app {
    position: relative;
    width: 24px;
    height: 24px;
}

.task-app svg {
    position: relative;
}

.task-app.open::after,
.task-app.focused::after {
    content: "";
    position: absolute;
    bottom: -8px;
    left: 9px;
    width: 6px;
    height: 3px;
    border-radius: 2px;
    background-color: #93a096;
}

.task-app.focused::after {
    left: 4px;
    width: 16px;
    background-color: #4cc2ff;
}

.task-app.focused::before {
    content: "";
    position: absolute;
    inset: -8px -7px;
    border: 1px solid #2b4534;
    border-radius: 4px;
    background-color: #20392a;
}

.count {
    position: absolute;
    top: -4px;
    left: 14px;
    width: 13px;
    height: 13px;
    border-radius: 50%;
    background-color: #c8194b;
    color: #fff;
    font-size: 9px;
    line-height: 13px;
    text-align: center;
}

.count.user {
    top: -5px;
    left: 13px;
    width: 16px;
    height: 16px;
    background-color: #4b2aa5;
    line-height: 16px;
}

.dot {
    position: absolute;
    top: 1px;
    right: -3px;
    width: 8px;
    height: 8px;
    border-radius: 50%;
    background-color: #f0353b;
}

.clock {
    margin-left: auto;
    text-align: right;
    line-height: 16px;
}
```
